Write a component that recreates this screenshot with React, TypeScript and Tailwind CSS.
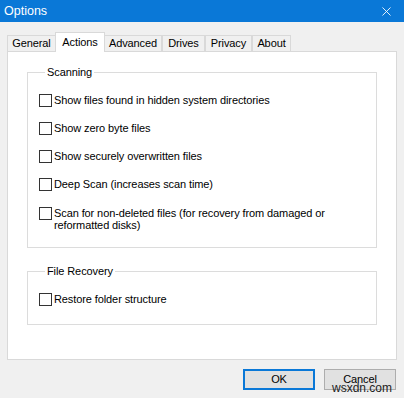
import { X } from 'lucide-react';

const tabs: [string, string][] = [
  ['General', 'w-[49px]'],
  ['Actions', 'w-[50px]'],
  ['Advanced', 'w-[58px]'],
  ['Drives', 'w-[43px]'],
  ['Privacy', 'w-[47px]'],
  ['About', 'w-[39px]'],
];

function CheckRow({ label, tall }: { label: React.ReactNode; tall?: boolean }) {
  return (
    <div className={`flex gap-[2px] ${tall ? 'items-start pt-[9px]' : 'h-[28px] items-center'}`}>
      <span className="w-[13px] h-[13px] border border-[#333] bg-white shrink-0" />
      <span className={tall ? 'leading-[11.5px] pt-[1px]' : 'leading-[12px]'}>{label}</span>
    </div>
  );
}

function Group({ title, children }: { title: string; children: React.ReactNode }) {
  return (
    <fieldset className="border border-[#dcdcdc] px-[11px]">
      <legend className="ml-[6px] px-[2px] leading-[16px]">{title}</legend>
      {children}
    </fieldset>
  );
}

export default function App() {
  return (
    <div
      className="relative w-[404px] h-[398px] bg-[#f0f0f0] text-[11px] tracking-[-0.1px] text-black flex flex-col overflow-hidden"
      style={{ fontFamily: '"Liberation Sans", Arial, sans-serif' }}
    >
      {/* title bar */}
      <div className="h-[22px] bg-[#0a78d7] flex items-center justify-between pl-[4px] pr-[10px] text-white text-[12.5px] tracking-normal">
        <span>Options</span>
        <X size={15} strokeWidth={1.4} />
      </div>

      {/* tabs */}
      <div className="flex items-end h-[29px] pl-[7px] relative z-10">
        {tabs.map(([t, w]) =>
          t === 'Actions' ? (
            <div key={t} className={`${w} h-[20px] bg-white border border-b-0 border-[#d9d9d9] flex items-center justify-center -mb-px -mx-[1px] relative z-10`}>
              {t}
            </div>
          ) : (
            <div key={t} className={`${w} h-[16px] border border-b-0 border-[#d9d9d9] flex items-center justify-center bg-[#f0f0f0]`}>
              {t}
            </div>
          )
        )}
      </div>

      {/* panel */}
      <div className="mx-[7px] h-[309px] bg-white border border-[#d9d9d9] pt-[12px] px-[19px] flex flex-col gap-[15px]">
        <Group title="Scanning">
          <div className="pt-[6px] pb-[16px]">
            <CheckRow label="Show files found in hidden system directories" />
            <CheckRow label="Show zero byte files" />
            <CheckRow label="Show securely overwritten files" />
            <CheckRow label="Deep Scan (increases scan time)" />
            <CheckRow
              tall
              label={
                <>
                  Scan for non-deleted files (for recovery from damaged or
                  <br />
                  reformatted disks)
                </>
              }
            />
          </div>
        </Group>
        <Group title="File Recovery">
          <div className="pt-[6px] pb-[11px]">
            <CheckRow label="Restore folder structure" />
          </div>
        </Group>
      </div>

      {/* buttons */}
      <div className="flex justify-end gap-[9px] pr-[8px] pt-[9px]">
        <button className="w-[72px] h-[21px] bg-[#e1e1e1] border-2 border-[#0a78d7] flex items-center justify-center">
          OK
        </button>
        <button className="w-[72px] h-[21px] bg-[#e1e1e1] border border-[#adadad] flex items-start justify-center pt-[1px]">
          Cancel
        </button>
      </div>

      <span className="absolute right-[12px] bottom-[4px] text-[12px] leading-[12px] tracking-normal text-[#222]">wsxdn.com</span>
    </div>
  );
}
